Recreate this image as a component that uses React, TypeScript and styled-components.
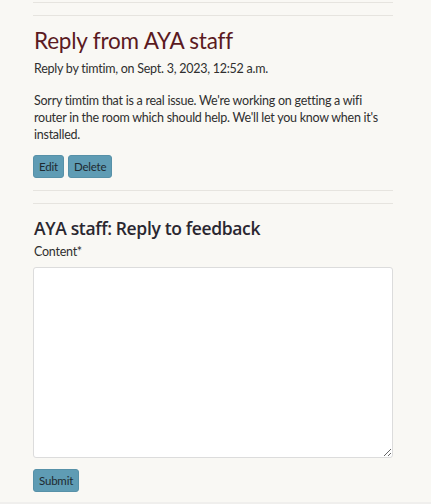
import React from "react";
import styled, { createGlobalStyle } from "styled-components";

const Global = createGlobalStyle`
  html, body { margin: 0; padding: 0; background: #f9f8f4; }
  body { font-family: "Segoe UI", Lato, "Noto Sans", sans-serif; color: #2b2b2b; }
`;

const Page = styled.main`
  width: 431px;
  height: 504px;
  box-sizing: border-box;
  background: #f9f8f4;
  padding: 2px 38px 0 33px;
  position: relative;
  overflow: hidden;
`;

const Rule = styled.hr<{ $gap?: number }>`
  border: none;
  border-top: 1px solid #e6e4df;
  margin: 0;
  margin-bottom: ${(p) => p.$gap ?? 0}px;
`;

const Title = styled.h2`
  font-size: 22.5px;
  letter-spacing: -0.2px;
  font-weight: 400;
  color: #5b1a1f;
  margin: 0 0 5px 1px;
  line-height: 28px;
`;

const Meta = styled.p`
  font-size: 12.5px;
  letter-spacing: -0.25px;
  margin: 0 0 14px 1px;
  line-height: 18px;
  color: #2f2f2f;
`;

const Body = styled.p`
  font-size: 12.5px;
  letter-spacing: -0.25px;
  line-height: 17px;
  margin: 0 0 12px 1px;
  color: #2f2f2f;
`;

const Actions = styled.div`
  display: flex;
  gap: 4px;
  margin-bottom: 12px;
`;

const Button = styled.button`
  font-family: inherit;
  font-size: 11.5px;
  letter-spacing: -0.2px;
  color: #1e2a30;
  background: #5f9cb4;
  border: 1px solid #5791a8;
  border-radius: 3px;
  height: 23px;
  padding: 0 5px;
  cursor: pointer;
`;

const Heading = styled.h3`
  font-family: "Segoe UI", "Open Sans", sans-serif;
  font-size: 17.5px;
  letter-spacing: -0.35px;
  font-weight: 600;
  color: #2a2730;
  margin: 0 0 2px 1px;
  line-height: 26px;
`;

const Label = styled.label`
  display: block;
  font-size: 12.5px;
  letter-spacing: -0.25px;
  line-height: 18px;
  margin: 0 0 6px 1px;
  color: #2f2f2f;
`;

const TextArea = styled.textarea`
  display: block;
  width: 360px;
  height: 191px;
  box-sizing: border-box;
  background: #fff;
  border: 1px solid #dcdcdc;
  border-radius: 3px;
  margin: 0 0 11px 0;
  resize: vertical;
`;

const SubmitButton = styled(Button)`
  height: 23px;
`;

const FooterEdge = styled.div`
  position: absolute;
  left: 0;
  right: 0;
  bottom: 0;
  height: 2px;
  background: #f0efed;
`;

export default function App() {
  return (
    <>
      <Global />
      <Page>
        <Rule $gap={12} />
        <Rule $gap={11} />
        <Title>Reply from AYA staff</Title>
        <Meta>Reply by timtim, on Sept. 3, 2023, 12:52 a.m.</Meta>
        <Body>
          Sorry timtim that is a real issue. We're working on getting a wifi router in the room which should help. We'll let you know when it's installed.
        </Body>
        <Actions>
          <Button>Edit</Button>
          <Button>Delete</Button>
        </Actions>
        <Rule $gap={12} />
        <Rule $gap={11} />
        <Heading>AYA staff: Reply to feedback</Heading>
        <Label htmlFor="content">Content*</Label>
        <TextArea id="content" />
        <SubmitButton>Submit</SubmitButton>
        <FooterEdge />
      </Page>
    </>
  );
}
